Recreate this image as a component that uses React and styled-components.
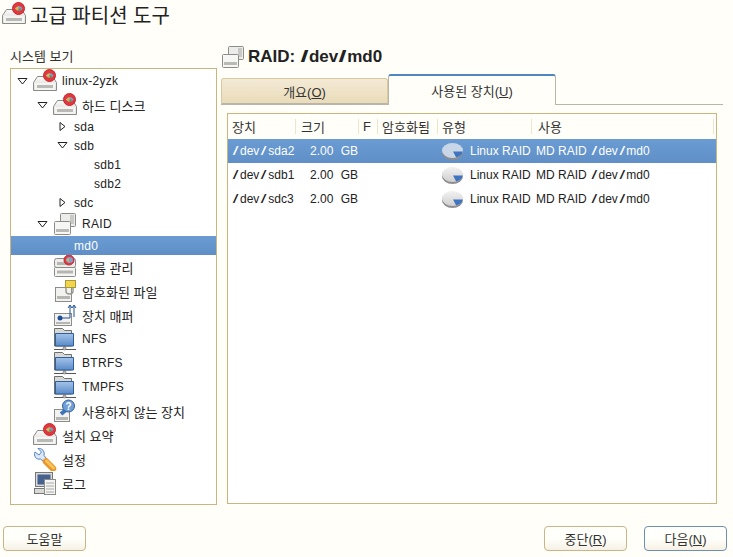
import React from "react";
import styled, { createGlobalStyle } from "styled-components";

const GlobalStyle = createGlobalStyle`
  html, body {
    margin: 0;
    padding: 0;
    background: #fffef8;
  }
  body {
    font-family: "Liberation Sans", "Noto Sans CJK KR", sans-serif;
    font-size: 13px;
    color: #222;
  }
`;

const Page = styled("div")`
  width: 733px;
  height: 557px;
  overflow: hidden;
  display: flex;
  flex-direction: column;
  box-sizing: border-box;
`;

const Header = styled("div")`
  height: 32px;
  display: flex;
  align-items: center;
  gap: 4px;
  padding: 0 0 4px 2px;
  box-sizing: border-box;
`;

const Title = styled("h1")`
  margin: 0;
  font-size: 20px;
  font-weight: 400;
  color: #222;
`;

const Main = styled("div")`
  display: flex;
  padding: 15px 0 0 10px;
  height: 478px;
  box-sizing: border-box;
`;

const Sidebar = styled("div")`
  width: 207px;
  display: flex;
  flex-direction: column;
`;

const SidebarLabel = styled("div")`
  height: 21px;
  font-size: 13px;
  line-height: 19px;
  color: #333;
`;

const TreeBox = styled("div")`
  height: 437px;
  border: 1px solid #c8b67e;
  background: #fff;
  box-sizing: border-box;
`;

const TreeRow = styled("div")`
  height: ${({ $short }) => ($short ? "19px" : "24px")};
  display: flex;
  align-items: center;
  padding-left: ${({ $level }) => 5 + $level * 20}px;
  background: ${({ $selected }) =>
    $selected ? "linear-gradient(#6a9bd3, #5f8fc6)" : "transparent"};
  color: ${({ $selected }) => ($selected ? "#fff" : "#222")};
  white-space: nowrap;
`;

const Arrow = styled("span")`
  width: 12px;
  height: 12px;
  flex: none;
  display: flex;
  align-items: center;
  justify-content: center;
`;

const IconSlot = styled("span")`
  width: 24px;
  height: 24px;
  flex: none;
  margin: 0 5px 0 5px;
  display: flex;
  align-items: center;
  justify-content: center;
`;

const Label = styled("span")`
  padding-left: ${({ $leaf }) => ($leaf ? 6 : 0)}px;
  font-size: ${({ $latin }) => ($latin ? "12px" : "13px")};
  letter-spacing: ${({ $latin }) => ($latin ? "0.3px" : "0")};
`;

const Content = styled("div")`
  width: 506px;
  padding-left: 4px;
  margin-top: -15px;
  box-sizing: border-box;
  display: flex;
  flex-direction: column;
`;

const ContentHeader = styled("div")`
  height: 32px;
  margin-top: 10px;
  padding-bottom: 3px;
  box-sizing: border-box;
  display: flex;
  align-items: center;
  gap: 3px;
`;

const ContentTitle = styled("h2")`
  margin: 0;
  font-size: 17px;
  font-weight: 700;
  color: #222;
`;

const Tabs = styled("div")`
  height: 30px;
  display: flex;
  align-items: flex-end;
  width: 502px;
  border-bottom: 1px solid #b9b5a8;
`;

const Tab = styled("div")`
  width: ${({ $active }) => ($active ? "168px" : "167px")};
  height: ${({ $active }) => ($active ? "31px" : "26px")};
  margin-bottom: ${({ $active }) => ($active ? "-1px" : "0")};
  box-sizing: border-box;
  display: flex;
  align-items: center;
  justify-content: center;
  color: #333;
  border: 1px solid ${({ $active }) => ($active ? "#b9b5a8" : "#d9c9a0")};
  border-top: ${({ $active }) => ($active ? "2px solid #4f86c0" : "1px solid #d9c9a0")};
  border-bottom: ${({ $active }) => ($active ? "none" : "1px solid #b9b5a8")};
  border-radius: 3px 3px 0 0;
  background: ${({ $active }) =>
    $active ? "#fffef8" : "linear-gradient(#f3ead6, #eadcb9)"};
`;

const Underlined = styled("span")`
  text-decoration: underline;
`;

const TableBox = styled("div")`
  width: 490px;
  height: 391px;
  margin: 8px 0 0 6px;
  border: 1px solid #c8b67e;
  background: #fff;
  box-sizing: border-box;
`;

const columns = "68px 63px 19px 60px 94px 182px";

const HeadRow = styled("div")`
  height: 25px;
  display: grid;
  grid-template-columns: ${columns};
  background: #fffef8;
`;

const HeadCell = styled("div")`
  padding-left: ${({ $pad }) => $pad ?? 4}px;
  display: flex;
  align-items: center;
  color: #333;
  position: relative;
  white-space: nowrap;
  &::after {
    content: "";
    position: absolute;
    right: 0;
    top: 5px;
    bottom: 5px;
    width: 1px;
    background: #eee6cc;
  }
`;

const Row = styled("div")`
  height: 24px;
  display: grid;
  grid-template-columns: ${columns};
  align-items: center;
  font-size: 12px;
  color: ${({ $selected }) => ($selected ? "#fff" : "#222")};
  background: ${({ $selected }) =>
    $selected ? "linear-gradient(#6a9bd3, #5f8fc6)" : "transparent"};
  white-space: nowrap;
`;

const Cell = styled("div")`
  padding-left: ${({ $pad }) => $pad ?? 4}px;
  word-spacing: ${({ $wide }) => ($wide ? "4px" : "0")};
`;

const TypeCell = styled("div")`
  display: flex;
  align-items: center;
  gap: 6px;
  padding-left: 3px;
`;

const Slash = styled("span")`
  display: inline-block;
  width: ${({ $w }) => $w}px;
  text-align: center;
  transform: scaleX(1.7);
`;

const Footer = styled("div")`
  flex: 1;
  display: flex;
  justify-content: space-between;
  padding: 16px 6px 0 3px;
`;

const ButtonGroup = styled("div")`
  display: flex;
  gap: 17px;
`;

const Button = styled("button")`
  width: 83px;
  height: 25px;
  padding: 0;
  border: 1px solid ${({ $primary }) => ($primary ? "#6e8fb2" : "#c9b587")};
  border-radius: 4px;
  background: linear-gradient(#fffffb 0 50%, #f6f1e5 100%);
  font-family: inherit;
  font-size: 13px;
  color: #333;
`;

const Disk = () => (
  <svg width="24" height="24" viewBox="0 0 24 24">
    <defs>
      <linearGradient id="diskTop" x1="0" y1="0" x2="0" y2="1">
        <stop offset="0" stopColor="#fafafa" />
        <stop offset="1" stopColor="#d4d4d0" />
      </linearGradient>
    </defs>
    <path d="M4.5 7.5h15l4 6v8h-23v-8z" fill="url(#diskTop)" stroke="#8a8a86" />
    <rect x="1.5" y="14" width="21" height="7" fill="#f4f4f2" />
    <rect x="4" y="16" width="16" height="3" fill="#b9b9b6" />
    <circle cx="16.5" cy="6.5" r="6" fill="#e2373d" stroke="#c9272d" />
    <path d="M13 6.5a4 3.5 0 0 1 7.5 0a4 3.5 0 0 1-7.5 0z" fill="#7fa0d2" />
    <path d="M13 6.5l3.5-2.5v5z" fill="#e2b93a" />
    <path d="M16.5 6.5l3 0-3 3z" fill="#5c8f4a" />
  </svg>
);

const Raid = () => (
  <svg width="24" height="24" viewBox="0 0 24 24">
    <rect x="7.5" y="1.5" width="15" height="13" rx="1" fill="#ececea" stroke="#8c8c88" />
    <rect x="17" y="3" width="4" height="9" fill="#c9c9c6" />
    <rect x="1.5" y="9.5" width="16" height="13" rx="1" fill="#f6f6f4" stroke="#8c8c88" />
    <rect x="3" y="17" width="13" height="3" fill="#b9b9b6" />
  </svg>
);

const Volume = () => (
  <svg width="24" height="24" viewBox="0 0 24 24">
    <rect x="1.5" y="3.5" width="21" height="9" rx="2" fill="#ececea" stroke="#8c8c88" />
    <rect x="1.5" y="12.5" width="21" height="9" rx="1" fill="#f4f4f2" stroke="#8c8c88" />
    <rect x="4" y="15.5" width="16" height="3" fill="#b5b5b2" />
    <rect x="4" y="7" width="10" height="3" fill="#b5b5b2" />
    <circle cx="16" cy="5" r="5" fill="#e2373d" stroke="#c9272d" />
    <path d="M13 5a3.5 3 0 0 1 7 0a3.5 3 0 0 1-7 0z" fill="#7fa0d2" />
    <path d="M13 5l3-2v4z" fill="#e2b93a" />
  </svg>
);

const Lock = () => (
  <svg width="24" height="24" viewBox="0 0 24 24">
    <rect x="2.5" y="8.5" width="16" height="14" fill="#f2f2f0" stroke="#8c8c88" />
    <rect x="4" y="17" width="13" height="3" fill="#b5b5b2" />
    <path d="M13 12v-4h7v4a3.5 3 0 0 1-7 0z" fill="none" stroke="#9a9a90" strokeWidth="1.5" />
    <rect x="12.5" y="1.5" width="10" height="7" fill="#f2d54a" stroke="#a89a3c" />
  </svg>
);

const Mapper = () => (
  <svg width="24" height="24" viewBox="0 0 24 24">
    <rect x="1.5" y="10.5" width="17" height="12" fill="#f2f2f0" stroke="#8c8c88" />
    <rect x="3" y="19" width="14" height="2" fill="#b5b5b2" />
    <circle cx="7" cy="15" r="2.5" fill="#1f4f96" />
    <path d="M7 15h10V3M21 14V3M15 5l2-3 2 3M19 5l2-3 2 3" fill="none" stroke="#1f4f96" />
  </svg>
);

const Network = () => (
  <svg width="24" height="24" viewBox="0 0 24 24">
    <defs>
      <linearGradient id="folderBlue" x1="0" y1="0" x2="0" y2="1">
        <stop offset="0" stopColor="#a4c4ea" />
        <stop offset="1" stopColor="#5a8bc8" />
      </linearGradient>
    </defs>
    <path d="M1.5 19V1.5h8l2 2h7V19z" fill="#d8d8d4" stroke="#6f6f6b" />
    <path d="M2.5 19V6.5h18V19z" fill="url(#folderBlue)" stroke="#2f5f9c" />
    <path d="M1 22.5h22" stroke="#555" />
    <path d="M11.5 19v3" stroke="#777" strokeWidth="2" />
    <circle cx="11.5" cy="21.5" r="1.6" fill="#bbb" stroke="#666" strokeWidth=".5" />
  </svg>
);

const Unused = () => (
  <svg width="24" height="24" viewBox="0 0 24 24">
    <rect x="1.5" y="10.5" width="15" height="12" fill="#f2f2f0" stroke="#8c8c88" />
    <rect x="3" y="18" width="12" height="3" fill="#b5b5b2" />
    <path d="M8 15l6-5" stroke="#3f74b8" strokeWidth="4" />
    <circle cx="15.5" cy="7" r="6" fill="#6f9fd6" stroke="#2f5f9c" />
    <text x="15.5" y="10.5" fontSize="10" fontWeight="700" fontFamily="Liberation Sans" textAnchor="middle" fill="#fff">?</text>
  </svg>
);

const Wrench = () => (
  <svg width="24" height="24" viewBox="0 0 24 24">
    <path d="M5 1.5L8.5 5 6 8 2 5C.5 9 3 13 7.5 12l3 2.5 3-3L11 8.5C12 4 9 1 5 1.5z" fill="#dce8f6" stroke="#4f80c4" />
    <path d="M13 14.5l7 7" stroke="#e8962c" strokeWidth="6.5" strokeLinecap="round" />
    <path d="M13.5 14l7 7" stroke="#f6c25a" strokeWidth="3" strokeLinecap="round" />
  </svg>
);

const LogIcon = () => (
  <svg width="24" height="24" viewBox="0 0 24 24">
    <rect x="2.5" y="1.5" width="17" height="14" fill="#d9d9d6" stroke="#77777a" />
    <rect x="4.5" y="3.5" width="13" height="10" fill="#44618f" />
    <rect x="1.5" y="17.5" width="13" height="5" fill="#d9d9d6" stroke="#77777a" />
    <rect x="11.5" y="8.5" width="11" height="15" fill="#f5f5f3" stroke="#8c8c88" />
    <path d="M13 12h8M13 15h8M13 18h8M13 21h8" stroke="#a8a8a8" />
  </svg>
);

const Pie = ({ light }) => (
  <svg width="23" height="19" viewBox="0 0 23 19">
    <defs>
      <linearGradient id="pieTop" x1="0" y1="0" x2="0" y2="1">
        <stop offset="0" stopColor="#f2f2f2" />
        <stop offset="1" stopColor="#cfcfcf" />
      </linearGradient>
    </defs>
    <ellipse cx="11.5" cy="10.5" rx="10.5" ry="7.5" fill="#8e8e8e" />
    <ellipse cx="11.5" cy="8.5" rx="10.5" ry="7.5" fill={light ? "#c9d6e8" : "url(#pieTop)"} />
    <path d="M12 9.5l9.7 0a10.5 7.5 0 0 1-6.5 6z" fill="#3f74c0" />
  </svg>
);

const ArrowIcon = ({ open }) => (
  <svg width="11" height="9" viewBox="0 0 11 9">
    {open ? (
      <path d="M1 1.5h9L5.5 7z" fill="#fff" stroke="#222" />
    ) : (
      <path d="M3 .5v8L8 4.5z" fill="#fff" stroke="#222" />
    )}
  </svg>
);

// slashes come out much wider in the original font
const wideSlashes = (text, width) =>
  text.split("/").flatMap((part, i) =>
    i === 0
      ? [part]
      : [<Slash key={i} $w={width}>/</Slash>, part]
  );

const treeRows = [
  { label: "linux-2yzk", latin: true, level: 0, open: true, icon: <Disk /> },
  { label: "하드 디스크", level: 1, open: true, icon: <Disk /> },
  { label: "sda", latin: true, level: 2, open: false, short: true },
  { label: "sdb", latin: true, level: 2, open: true, short: true },
  { label: "sdb1", latin: true, level: 3, short: true },
  { label: "sdb2", latin: true, level: 3, short: true },
  { label: "sdc", latin: true, level: 2, open: false, short: true },
  { label: "RAID", latin: true, level: 1, open: true, icon: <Raid /> },
  { label: "md0", latin: true, level: 2, short: true, selected: true },
  { label: "볼륨 관리", level: 1, icon: <Volume /> },
  { label: "암호화된 파일", level: 1, icon: <Lock /> },
  { label: "장치 매퍼", level: 1, icon: <Mapper /> },
  { label: "NFS", latin: true, level: 1, icon: <Network /> },
  { label: "BTRFS", latin: true, level: 1, icon: <Network /> },
  { label: "TMPFS", latin: true, level: 1, icon: <Network /> },
  { label: "사용하지 않는 장치", level: 1, icon: <Unused /> },
  { label: "설치 요약", level: 0, icon: <Disk /> },
  { label: "설정", level: 0, icon: <Wrench /> },
  { label: "로그", level: 0, icon: <LogIcon /> },
];

const devices = ["/dev/sda2", "/dev/sdb1", "/dev/sdc3"];

export default function App() {
  return (
    <Page>
      <GlobalStyle />
      <Header>
        <Disk />
        <Title>고급 파티션 도구</Title>
      </Header>
      <Main>
        <Sidebar>
          <SidebarLabel>시스템 보기</SidebarLabel>
          <TreeBox>
            {treeRows.map((row) => (
              <TreeRow
                key={row.label}
                $level={row.level}
                $short={row.short}
                $selected={row.selected}
              >
                <Arrow>{row.open !== undefined && <ArrowIcon open={row.open} />}</Arrow>
                {row.icon && <IconSlot>{row.icon}</IconSlot>}
                <Label $leaf={!row.icon} $latin={row.latin}>{row.label}</Label>
              </TreeRow>
            ))}
          </TreeBox>
        </Sidebar>
        <Content>
          <ContentHeader>
            <Raid />
            <ContentTitle>{wideSlashes("RAID: /dev/md0", 9)}</ContentTitle>
          </ContentHeader>
          <Tabs>
            <Tab>
              <span>
                개요(<Underlined>O</Underlined>)
              </span>
            </Tab>
            <Tab $active>
              <span>
                사용된 장치(<Underlined>U</Underlined>)
              </span>
            </Tab>
          </Tabs>
          <TableBox>
            <HeadRow>
              <HeadCell>장치</HeadCell>
              <HeadCell $pad={5}>크기</HeadCell>
              <HeadCell>F</HeadCell>
              <HeadCell>암호화됨</HeadCell>
              <HeadCell>유형</HeadCell>
              <HeadCell $pad={6}>사용</HeadCell>
            </HeadRow>
            {devices.map((device, i) => (
              <Row key={device} $selected={i === 0}>
                <Cell $pad={3}>{wideSlashes(device, 9)}</Cell>
                <Cell $pad={14} $wide>2.00 GB</Cell>
                <Cell />
                <Cell />
                <TypeCell>
                  <Pie light={i === 0} />
                  Linux RAID
                </TypeCell>
                <Cell>{wideSlashes("MD RAID /dev/md0", 8.5)}</Cell>
              </Row>
            ))}
          </TableBox>
        </Content>
      </Main>
      <Footer>
        <Button>도움말</Button>
        <ButtonGroup>
          <Button>
            중단(<Underlined>R</Underlined>)
          </Button>
          <Button $primary>
            다음(<Underlined>N</Underlined>)
          </Button>
        </ButtonGroup>
      </Footer>
    </Page>
  );
}
